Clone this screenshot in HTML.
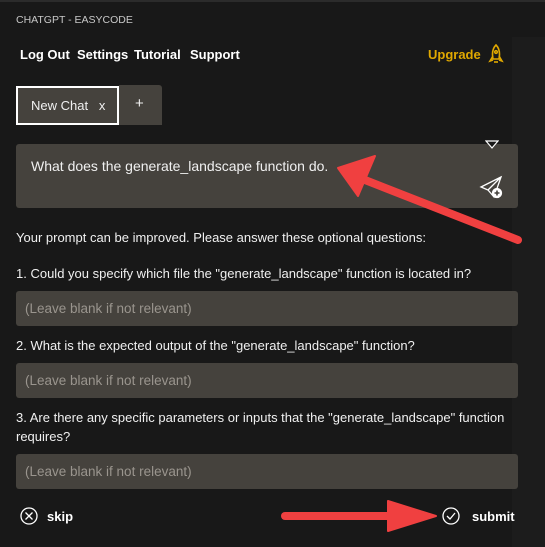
<!DOCTYPE html>
<html><head><style>
body{margin:0;width:545px;height:547px;background:#181818;font-family:"Liberation Sans",sans-serif;color:#e6e6e6;position:relative;overflow:hidden}
.a{position:absolute}
.top{left:0;top:0;width:545px;height:2px;background:#2b2b2b}
.sb{left:512px;top:37px;width:33px;height:510px;background:#1c1c1c}
.hd{left:16px;top:14px;font-size:10.5px;color:#c8c8c8}
.nav{top:47px;font-size:13px;font-weight:bold;color:#fff}
.box{left:16px;width:502px;background:#45423d;border-radius:3px}
.ph{font-size:13.5px;color:#9a958e;left:9px;top:10px;position:absolute}
.q{left:16px;font-size:13px;color:#f0f0f0;line-height:19px}
</style></head><body>
<div class="a top"></div>
<div class="a sb"></div>
<div class="a hd">CHATGPT - EASYCODE</div>
<div class="a nav" style="left:20px">Log Out</div>
<div class="a nav" style="left:77px">Settings</div>
<div class="a nav" style="left:134px">Tutorial</div>
<div class="a nav" style="left:190px">Support</div>
<div class="a nav" style="left:428px;color:#e0a800">Upgrade</div>
<svg class="a" style="left:486px;top:44px" width="20" height="20" viewBox="0 0 20 20" fill="none" stroke="#e0a800" stroke-width="1.6"><path d="M10 1C6 5 6 10 7 15h6c1-5 1-10-3-14z"/><circle cx="10" cy="8" r="1.3"/><path d="M7 12l-3 5 3-1M13 12l3 5-3-1M9 17v2M11 17v2"/></svg>
<div class="a" style="left:16px;top:86px;width:99px;height:35px;border:2px solid #fff;background:#45423d"></div>
<div class="a" style="left:31px;top:98px;font-size:13px;color:#f0f0f0">New Chat&nbsp;&nbsp;&nbsp;x</div>
<div class="a" style="left:119px;top:85px;width:43px;height:40px;background:#45423d;border-radius:0 3px 0 0"></div>
<div class="a" style="left:135px;top:95px;font-size:15px;color:#f0f0f0">+</div>
<div class="a box" style="top:144px;height:64px"><div style="position:absolute;left:15px;top:14px;font-size:14px;color:#f0f0f0">What does the generate_landscape function do.</div></div>
<svg class="a" style="left:485px;top:140px" width="14" height="10"><path d="M1 1h12L7 8z" fill="#181818" stroke="#fff" stroke-width="1.2"/></svg>
<svg class="a" style="left:479px;top:175px" width="26" height="26" viewBox="0 0 26 26" fill="none" stroke="#fff" stroke-width="1.3"><path d="M22 2L2 12l7 3 6 7zM9 15L22 2"/><circle cx="18" cy="18" r="4.5" fill="#fff"/><path d="M18 15.5v5M15.5 18h5" stroke="#45423d" stroke-width="1.6"/></svg>
<div class="a q" style="top:228px">Your prompt can be improved. Please answer these optional questions:</div>
<div class="a q" style="top:264px">1. Could you specify which file the "generate_landscape" function is located in?</div>
<div class="a box" style="top:291px;height:35px"><span class="ph">(Leave blank if not relevant)</span></div>
<div class="a q" style="top:336px">2. What is the expected output of the "generate_landscape" function?</div>
<div class="a box" style="top:363px;height:35px"><span class="ph">(Leave blank if not relevant)</span></div>
<div class="a q" style="top:408px">3. Are there any specific parameters or inputs that the "generate_landscape" function<br>requires?</div>
<div class="a box" style="top:454px;height:35px"><span class="ph">(Leave blank if not relevant)</span></div>
<svg class="a" style="left:19px;top:506px" width="20" height="20" fill="none" stroke="#fff" stroke-width="1.3"><circle cx="10" cy="10" r="8"/><path d="M6.5 6.5l7 7M13.5 6.5l-7 7"/></svg>
<div class="a" style="left:47px;top:509px;font-size:13px;font-weight:bold;color:#fff">skip</div>
<svg class="a" style="left:441px;top:506px" width="20" height="20" fill="none" stroke="#fff" stroke-width="1.3"><circle cx="10" cy="10" r="8"/><path d="M6 10l3 3 5-6"/></svg>
<div class="a" style="left:472px;top:509px;font-size:13px;font-weight:bold;color:#fff">submit</div>
<svg class="a" style="left:0;top:0" width="545" height="547">
<g fill="#f04040" stroke="#f04040">
<path d="M518 240L365 180" stroke-width="8" stroke-linecap="round"/>
<path d="M338 168L375 156L358 196z" stroke-width="2" stroke-linejoin="round"/>
<path d="M285 516H410" stroke-width="8" stroke-linecap="round"/>
<path d="M436 516L388 501V531z" stroke-width="2" stroke-linejoin="round"/>
</g></svg>
</body></html>
